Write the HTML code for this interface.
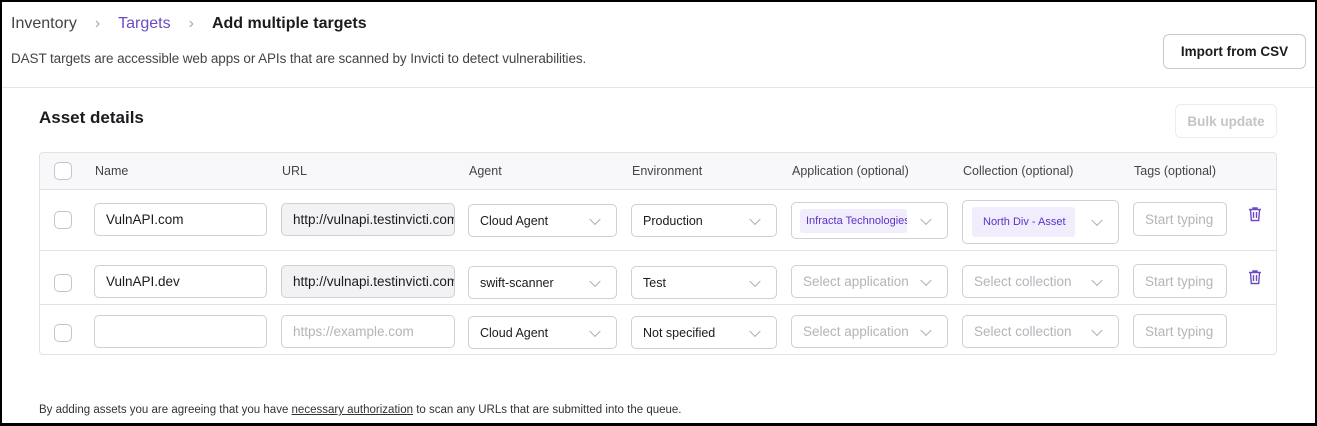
<!DOCTYPE html>
<html><head><meta charset="utf-8"><style>
*{box-sizing:border-box;margin:0;padding:0}
html,body{width:1317px;height:426px;overflow:hidden;background:#fff}
body{font-family:"Liberation Sans",sans-serif;color:#1b1b1f;position:relative;border:2px solid #000;border-bottom-width:3px}
.a{position:absolute}
.bc{top:13px;left:9px;font-size:16px;white-space:nowrap}
.desc{top:49px;left:9px;font-size:13.5px;color:#444;letter-spacing:-0.1px}
.btn{border:1px solid #c9c9d0;border-radius:6px;background:#fff;font-weight:bold;font-size:13.5px;display:flex;align-items:center;justify-content:center}
.hr{left:0;right:0;top:85px;height:1px;background:#e4e4e8}
.h2{top:106px;left:37px;font-size:17px;font-weight:bold}
.tbl{left:37px;top:150px;width:1238px;height:203px;border:1px solid #e2e2e6;border-radius:4px}
.hd{left:0;top:0;width:100%;height:37px;background:#f8f8fa;border-bottom:1px solid #e2e2e6;border-radius:4px 4px 0 0}
.th{top:11px;font-size:12.5px;color:#444}
.ln{left:0;width:100%;height:1px;background:#e2e2e6}
.cb{width:18px;height:18px;border:1px solid #c4c4ca;border-radius:5px;background:#fff}
.in{border:1px solid #cfcfd5;border-radius:5px;background:#fff;font-size:13.5px;display:flex;align-items:center;padding-left:11px;padding-right:2px;white-space:nowrap;overflow:hidden}
.in.sel{padding-right:40px}
.g{background:#f2f2f4}
.ph{color:#b4b4ba}
.sel::after{content:"";position:absolute;right:17px;top:50%;width:7px;height:7px;border-right:1px solid #aaa;border-bottom:1px solid #aaa;transform:translateY(-70%) rotate(45deg)}
.sm{font-size:12.5px}
.chip{background:#f1edfc;color:#5a32c8;font-size:11px;padding:6px 6px;border-radius:3px;overflow:hidden;white-space:nowrap;flex:none}
.foot{top:402px;left:37px;font-size:11.5px;color:#333}
</style></head><body>
<div class="a bc"><span style="color:#444">Inventory</span><span style="color:#aaa;margin:0 18px">›</span><span style="color:#6b4bc4">Targets</span><span style="color:#aaa;margin:0 18px">›</span><b>Add multiple targets</b></div>
<div class="a desc">DAST targets are accessible web apps or APIs that are scanned by Invicti to detect vulnerabilities.</div>
<div class="a btn" style="left:1161px;top:32px;width:143px;height:35px">Import from CSV</div>
<div class="a hr"></div>
<div class="a h2">Asset details</div>
<div class="a btn" style="left:1173px;top:102px;width:102px;height:34px;color:#c4c4c8;border-color:#ececef">Bulk update</div>
<div class="a tbl">
 <div class="a hd"></div>
 <div class="a cb" style="left:14px;top:9px"></div>
 <div class="a th" style="left:55px">Name</div>
 <div class="a th" style="left:242px">URL</div>
 <div class="a th" style="left:429px">Agent</div>
 <div class="a th" style="left:592px">Environment</div>
 <div class="a th" style="left:752px">Application (optional)</div>
 <div class="a th" style="left:923px">Collection (optional)</div>
 <div class="a th" style="left:1094px">Tags (optional)</div>
 <div class="a ln" style="top:97px"></div>
 <div class="a ln" style="top:151px"></div>
</div>
<div class="a cb" style="left:52px;top:209px"></div>
<div class="a in" style="left:92px;top:201px;width:173px;height:33px">VulnAPI.com</div>
<div class="a in g" style="left:279px;top:201px;width:174px;height:33px">http://vulnapi.testinvicti.com</div>
<div class="a in sel sm" style="left:466px;top:202px;width:149px;height:33px">Cloud Agent</div>
<div class="a in sel sm" style="left:629px;top:202px;width:146px;height:33px">Production</div>
<div class="a in sel" style="left:789px;top:200px;width:157px;height:37px;padding-left:8px"><span class="chip" style="width:107px">Infracta Technologies</span></div>
<div class="a in sel" style="left:960px;top:198px;width:157px;height:44px;padding-left:9px"><span class="chip" style="width:103px;padding:9px 11px">North Div - Asset</span></div>
<div class="a in ph" style="left:1131px;top:200px;width:94px;height:34px">Start typing</div>
<svg class="a" style="left:1245px;top:204px" width="16" height="16" viewBox="0 0 16 16" fill="none" stroke="#6b4bc4" stroke-width="1.4"><path d="M2 3.5h12M6 3.5V2h4v1.5M3.5 3.5l.8 11h7.4l.8-11M6.5 6v6M9.5 6v6"/></svg>
<div class="a cb" style="left:52px;top:272px"></div>
<div class="a in" style="left:92px;top:263px;width:173px;height:33px">VulnAPI.dev</div>
<div class="a in g" style="left:279px;top:263px;width:174px;height:33px">http://vulnapi.testinvicti.com</div>
<div class="a in sel sm" style="left:466px;top:264px;width:149px;height:33px">swift-scanner</div>
<div class="a in sel sm" style="left:629px;top:264px;width:146px;height:33px">Test</div>
<div class="a in sel ph" style="left:789px;top:263px;width:157px;height:33px">Select application</div>
<div class="a in sel ph" style="left:960px;top:263px;width:157px;height:33px">Select collection</div>
<div class="a in ph" style="left:1131px;top:262px;width:94px;height:34px">Start typing</div>
<svg class="a" style="left:1245px;top:267px" width="16" height="16" viewBox="0 0 16 16" fill="none" stroke="#6b4bc4" stroke-width="1.4"><path d="M2 3.5h12M6 3.5V2h4v1.5M3.5 3.5l.8 11h7.4l.8-11M6.5 6v6M9.5 6v6"/></svg>
<div class="a cb" style="left:52px;top:322px"></div>
<div class="a in" style="left:92px;top:313px;width:173px;height:33px"></div>
<div class="a in ph" style="left:279px;top:313px;width:174px;height:33px">https://example.com</div>
<div class="a in sel sm" style="left:466px;top:314px;width:149px;height:33px">Cloud Agent</div>
<div class="a in sel sm" style="left:629px;top:314px;width:146px;height:33px">Not specified</div>
<div class="a in sel ph" style="left:789px;top:313px;width:157px;height:33px">Select application</div>
<div class="a in sel ph" style="left:960px;top:313px;width:157px;height:33px">Select collection</div>
<div class="a in ph" style="left:1131px;top:312px;width:94px;height:34px">Start typing</div>
<div class="a foot">By adding assets you are agreeing that you have <u>necessary authorization</u> to scan any URLs that are submitted into the queue.</div>
</body></html>
